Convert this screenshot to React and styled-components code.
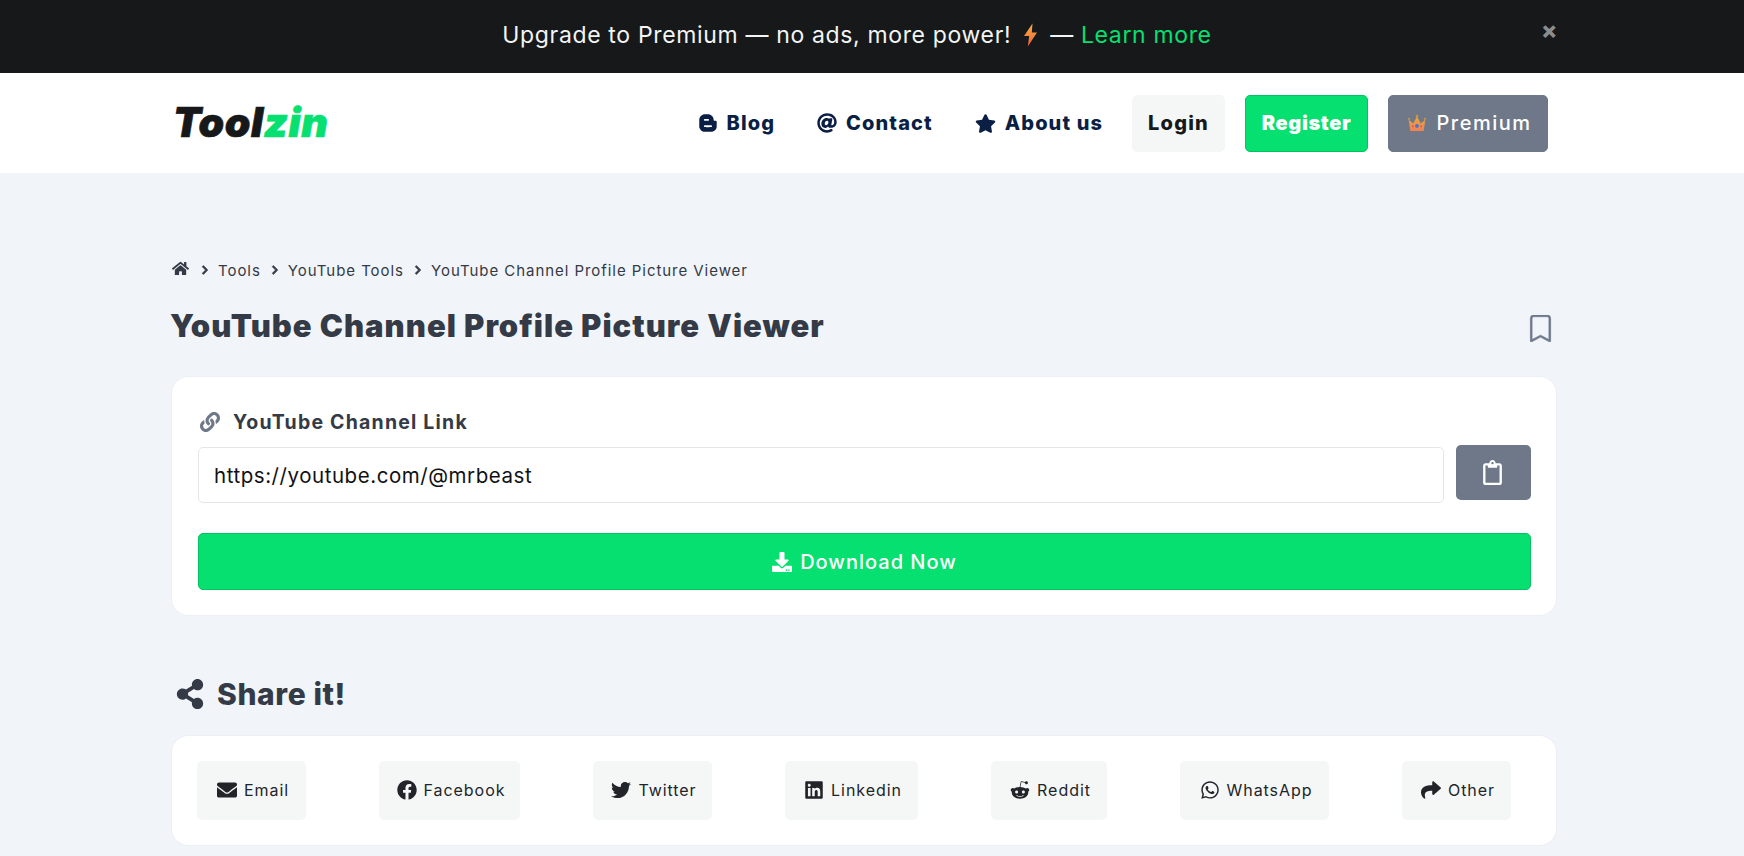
import React from "react";
import styled, { createGlobalStyle } from "styled-components";
import { FaBloggerB, FaAt, FaStar, FaHome, FaChevronRight, FaLink, FaDownload, FaShareAlt, FaEnvelope, FaFacebook, FaTwitter, FaLinkedin, FaRedditAlien, FaWhatsapp, FaShare, FaRegClipboard } from "react-icons/fa";
import { BsBookmark } from "react-icons/bs";

const Global = createGlobalStyle`
  html, body { margin: 0; padding: 0; background: #f1f4f9; overflow: hidden; }
  body { font-family: Inter, "Liberation Sans", sans-serif; color: #343a46; }
  * { box-sizing: border-box; }
`;
const Page = styled.div`height: 856px; overflow: hidden;`;
const Banner = styled.div`
  position: relative; height: 73px; background: #16181a; color: #f3f4f4;
  display: flex; align-items: center; justify-content: center;
  font-size: 23px; letter-spacing: 0.65px; padding: 0 30px 4px 0;
`;
const Bolt = styled.svg`width: 15px; height: 24px; margin: 0 12px 0 12px; flex: none;`;
const LearnMore = styled.a`color: #06e070; margin-left: 7px;`;
const Close = styled.span`
  position: absolute; right: 186px; top: 17px; color: #8b8c8d; font-weight: 800; font-size: 24px; line-height: 28px;
`;
const Header = styled.header`
  height: 100px; background: #fff; padding: 0 196px 0 173px;
  display: flex; align-items: center; justify-content: space-between;
`;
const Logo = styled.div`
  font-size: 41px; font-weight: 900; font-style: italic; letter-spacing: 0.6px; color: #16181a; line-height: 1; margin-top: -1px;
  -webkit-text-stroke: 0.7px currentColor;
`;
const LogoAccent = styled.span`color: #06e070;`;
const Nav = styled.nav`display: flex; align-items: center;`;
const NavLink = styled.a`
  display: flex; align-items: center; gap: 9px; color: #0b1f45; font-weight: 800; font-size: 20px;
  margin-right: ${p => p.$mr}px; letter-spacing: 1.1px;
`;
const NavBtn = styled.button`
  height: 57px; width: ${p => p.$w}px; margin-left: ${p => p.$ml}px; border-radius: 5px; border: 1px solid ${p => p.$border};
  background: ${p => p.$bg}; color: ${p => p.$color}; font: ${p => p.$weight} 20px Inter, sans-serif; letter-spacing: ${p => p.$ls}px;
  display: flex; align-items: center; justify-content: center; gap: 9px; padding: 0 0 0 ${p => p.$pl || 0}px;
`;
const Crown = styled.svg`width: 20px; height: 20px; flex: none;`;
const Main = styled.main`padding: 86px 188px 0 172px;`;
const Crumbs = styled.div`
  display: flex; align-items: center; height: 22px; font-size: 15px; color: #343a46; letter-spacing: 0.95px;
`;
const HomeIcon = styled(FaHome)`font-size: 17px; margin-right: 11px; margin-top: -3px; color: #343a46;`;
const Sep = styled(FaChevronRight)`
  font-size: 10px; margin: 0 ${p => p.$r || 8}px 0 ${p => p.$l || 0}px; color: #343a46; stroke: currentColor; stroke-width: 40;
`;
const TitleRow = styled.div`
  display: flex; justify-content: space-between; align-items: center; height: 40px; margin-top: 25px; padding-right: 3px;
`;
const Title = styled.h1`
  margin: 0 0 0 -2px; font-size: 31px; font-weight: 900; color: #343a46; letter-spacing: 1px; line-height: 40px;
`;
const Mark = styled(BsBookmark)`font-size: 27px; color: #6e7889; margin-top: 4px; margin-right: -1px; stroke: #6e7889; stroke-width: 0.4;`;
const Card = styled.section`
  background: #fff; border-radius: 16px; box-shadow: 0 0 2px rgba(40, 60, 90, 0.08);
`;
const FormCard = styled(Card)`margin-top: 31px; height: 238px; padding: 32px 25px 0 26px;`;
const LabelRow = styled.div`display: flex; align-items: center; height: 26px; font-size: 19.500px; font-weight: 700; color: #343a46; letter-spacing: 1.2px;`;
const LinkIcon = styled(FaLink)`font-size: 20px; color: #6e7889; margin: 0 13px 0 2px;`;
const InputRow = styled.div`display: flex; gap: 12px; align-items: flex-start; margin-top: 10px;`;
const Input = styled.input`
  flex: 1; height: 56px; margin-top: 2px; border: 1px solid #e4e6ea; border-radius: 5px; padding: 0 15px;
  font: 400 20.500px Inter, sans-serif; letter-spacing: 0.55px; color: #111; outline: none; background: #fff;
`;
const PasteBtn = styled.button`
  width: 75px; height: 55px; background: #6e7889; border: 0; border-radius: 5px; color: #fff; font-size: 25px;
  display: flex; align-items: center; justify-content: center; padding: 0 3px 0 0;
`;
const Download = styled.button`
  width: 100%; height: 57px; margin-top: 30px; background: #06e070; border: 1px solid #03c260; border-radius: 5px;
  color: #fff; font: 500 20px Inter, sans-serif; letter-spacing: 1px; display: flex; align-items: center; justify-content: center; gap: 8px;
`;
const ShareHead = styled.h2`
  display: flex; align-items: center; gap: 12px; height: 40px; margin: 59px 0 0; padding-left: 3px;
  font-size: 30px; font-weight: 800; color: #343a46; letter-spacing: 0.6px;
`;
const ShareCard = styled(Card)`
  margin-top: 22px; height: 109px; padding: 25px 45px 25px 25px; display: flex; justify-content: space-between; align-items: flex-start;
`;
const ShareBtn = styled.a`
  width: ${p => p.$w}px; height: 59px; background: #f5f7f7; border-radius: 5px; color: #212529; font-size: 16px; letter-spacing: 0.95px;
  display: flex; align-items: center; justify-content: center; gap: 7px; padding: 0 0 2px 3px;
  svg { font-size: 20px; flex: none; }
`;

const shares = [
  ["Email", FaEnvelope, 109], ["Facebook", FaFacebook, 141], ["Twitter", FaTwitter, 119], ["Linkedin", FaLinkedin, 133],
  ["Reddit", FaRedditAlien, 116], ["WhatsApp", FaWhatsapp, 149], ["Other", FaShare, 109],
];

export default function App() {
  return (
    <Page>
      <Global />
      <Banner>
        Upgrade to Premium — no ads, more power!
        <Bolt viewBox="0 0 15 24">
          <defs><linearGradient id="b" x1="0" y1="0" x2="0" y2="1"><stop offset="0" stopColor="#f9b23c" /><stop offset="1" stopColor="#f0603f" /></linearGradient></defs>
          <path d="M9.500.5 1 13h5.200L4.800 23.500 14 9.500H8.800z" fill="url(#b)" />
        </Bolt>
        —<LearnMore>Learn more</LearnMore>
        <Close>×</Close>
      </Banner>
      <Header>
        <Logo>Tool<LogoAccent>zin</LogoAccent></Logo>
        <Nav>
          <NavLink $mr={42}><FaBloggerB size={20} />Blog</NavLink>
          <NavLink $mr={42}><FaAt size={20} />Contact</NavLink>
          <NavLink $mr={0}><FaStar size={21} />About us</NavLink>
          <NavBtn $w={93} $ml={29} $bg="#f5f7f7" $border="#f5f7f7" $color="#16181a" $weight={800} $ls={1.2}>Login</NavBtn>
          <NavBtn $w={123} $ml={20} $bg="#06e070" $border="#03c260" $color="#fff" $weight={900} $ls={0.6}>Register</NavBtn>
          <NavBtn $w={160} $ml={20} $bg="#6e7889" $border="#6e7889" $color="#fff" $weight={500} $ls={1.5} $pl={3}>
            <Crown viewBox="0 0 24 24">
              <defs><linearGradient id="c" x1="0" y1="0" x2="0" y2="1"><stop offset="0" stopColor="#e8a93c" /><stop offset="1" stopColor="#ef8353" /></linearGradient></defs>
              <circle cx="12" cy="3.500" r="1.500" fill="#c99a3a" />
              <circle cx="2.500" cy="7" r="1.300" fill="#c99a3a" />
              <circle cx="21.500" cy="7" r="1.300" fill="#c99a3a" />
              <path d="M2 8l5.500 4.500L12 4l4.500 8.500L22 8l-2 13.500H4z" fill="url(#c)" />
              <circle cx="12" cy="15.500" r="2.200" fill="#3f74d8" />
              <circle cx="7" cy="16" r="1.200" fill="#e2506a" />
              <circle cx="17" cy="16" r="1.200" fill="#e2506a" />
            </Crown>
            Premium
          </NavBtn>
        </Nav>
      </Header>
      <Main>
        <Crumbs>
          <HomeIcon />
          <Sep />Tools<Sep $l={9} />YouTube Tools<Sep $l={9} />YouTube Channel Profile Picture Viewer
        </Crumbs>
        <TitleRow>
          <Title>YouTube Channel Profile Picture Viewer</Title>
          <Mark />
        </TitleRow>
        <FormCard>
          <LabelRow><LinkIcon />YouTube Channel Link</LabelRow>
          <InputRow>
            <Input readOnly value="https://youtube.com/@mrbeast" />
            <PasteBtn><FaRegClipboard /></PasteBtn>
          </InputRow>
          <Download><FaDownload size={20} />Download Now</Download>
        </FormCard>
        <ShareHead><FaShareAlt size={30} />Share it!</ShareHead>
        <ShareCard>
          {shares.map(([name, Icon, w]) => (
            <ShareBtn key={name} $w={w}><Icon />{name}</ShareBtn>
          ))}
        </ShareCard>
      </Main>
    </Page>
  );
}
